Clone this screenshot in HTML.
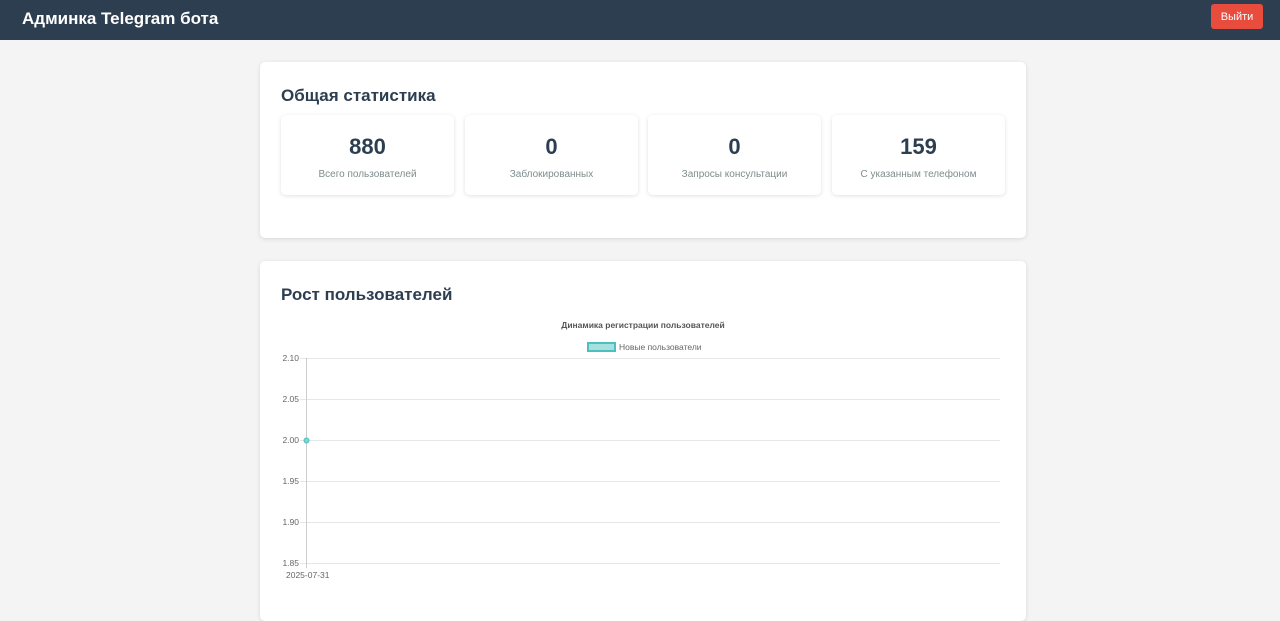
<!DOCTYPE html>
<html><head><meta charset="utf-8"><style>
*{margin:0;padding:0;box-sizing:border-box}
body{width:1280px;height:602px;overflow:hidden;background:#f4f4f5;font-family:"Liberation Sans","DejaVu Sans",sans-serif;position:relative}
.hdr{position:absolute;left:0;top:0;width:1280px;height:40px;background:#2c3e50}
.hdr h1{position:absolute;left:22px;top:9px;color:#fff;font-size:17px;font-weight:bold;line-height:20px}
.btn{position:absolute;left:1211px;top:4px;width:52px;height:25px;background:#e74c3c;border-radius:3px;color:#fff;font-size:11px;text-align:center;line-height:13px;padding-top:7px}
.card{position:absolute;left:260px;width:766px;background:#fff;border-radius:5px;box-shadow:0 1px 4px rgba(0,0,0,.12)}
.card h2{position:absolute;left:21px;font-size:17px;font-weight:bold;color:#2c3e50}
.st{position:absolute;top:53px;width:173px;height:80px;background:#fff;border-radius:5px;box-shadow:0 1px 4px rgba(0,0,0,.12);text-align:center}
.st b{display:block;margin-top:19px;font-size:22px;color:#2c3e50}
.st span{display:block;margin-top:9px;font-size:10px;color:#7f8c8d}
</style></head><body>
<div class="hdr"><h1>Админка Telegram бота</h1><div class="btn">Выйти</div></div>
<div class="card" style="top:62px;height:176px">
<h2 style="top:24px">Общая статистика</h2>
<div class="st" style="left:21px"><b>880</b><span>Всего пользователей</span></div>
<div class="st" style="left:205px"><b>0</b><span>Заблокированных</span></div>
<div class="st" style="left:388px"><b>0</b><span>Запросы консультации</span></div>
<div class="st" style="left:572px"><b>159</b><span>С указанным телефоном</span></div>
</div>
<div class="card" style="top:261px;height:360px">
<h2 style="top:24px">Рост пользователей</h2>
</div>
<svg style="position:absolute;left:0;top:0" width="1280" height="602" font-family="Liberation Sans, sans-serif">
<text x="643" y="328" font-size="8.5" font-weight="bold" fill="#555" text-anchor="middle">Динамика регистрации пользователей</text>
<rect x="588" y="343" width="27" height="8" fill="#a8e0e0" stroke="#4bc0c0" stroke-width="2"/>
<text x="619" y="350" font-size="8.5" fill="#666">Новые пользователи</text>
<g stroke="#e6e6e6" stroke-width="1">
<line x1="300" y1="358.5" x2="1000" y2="358.5"/><line x1="300" y1="399.5" x2="1000" y2="399.5"/><line x1="300" y1="440.5" x2="1000" y2="440.5"/><line x1="300" y1="481.5" x2="1000" y2="481.5"/><line x1="300" y1="522.5" x2="1000" y2="522.5"/><line x1="300" y1="563.5" x2="1000" y2="563.5"/>
</g>
<line x1="306.5" y1="358" x2="306.5" y2="568" stroke="#ccc"/>
<g font-size="8.5" fill="#666" text-anchor="end">
<text x="299" y="361">2.10</text><text x="299" y="402">2.05</text><text x="299" y="443">2.00</text><text x="299" y="484">1.95</text><text x="299" y="525">1.90</text><text x="299" y="566">1.85</text>
</g>
<text x="286" y="578" font-size="8.5" fill="#666">2025-07-31</text>
<circle cx="306.5" cy="440.5" r="2.5" fill="#7fd3d3" stroke="#4bc0c0"/>
</svg>
</body></html>
